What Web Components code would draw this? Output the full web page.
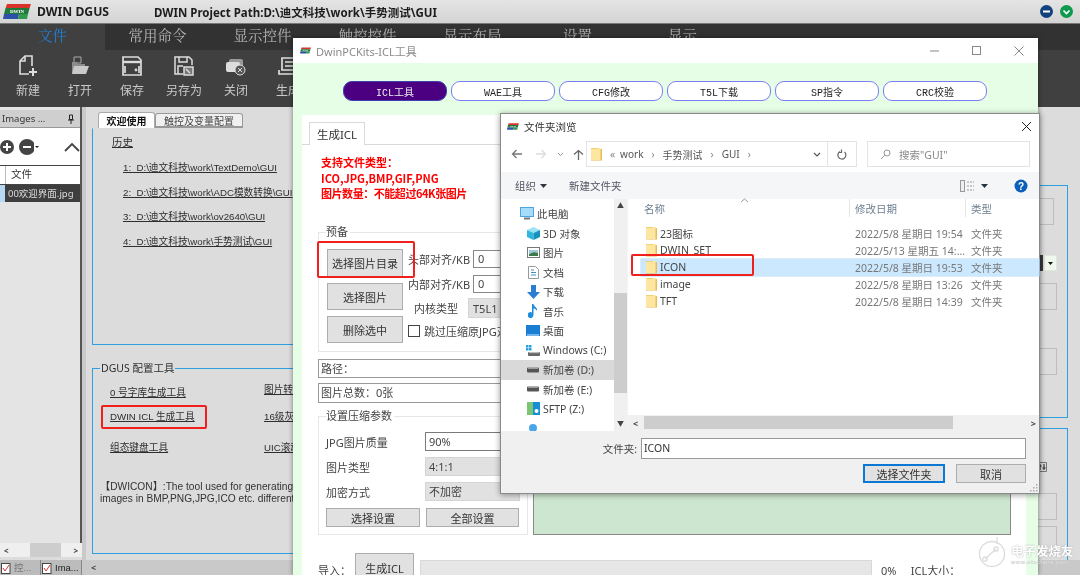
<!DOCTYPE html>
<html lang="zh">
<head>
<meta charset="utf-8">
<title>DWIN DGUS</title>
<style>
  html, body { margin: 0; padding: 0; background: #d9d9d9; }
</style>
</head>
<body>
<dgus-page>
  <app-window></app-window>
  <icl-window></icl-window>
  <folder-dialog></folder-dialog>
  <red-mark x="101" y="405" w="106" h="24"></red-mark>
  <red-mark x="317" y="241" w="98" h="37"></red-mark>
  <red-mark x="631" y="254" w="123" h="22"></red-mark>
  <fans-mark></fans-mark>
</dgus-page>

<script>
const ARIAL = '"Liberation Sans","Noto Sans CJK SC",sans-serif';
const UI = '"Noto Sans","Noto Sans CJK SC",sans-serif';

// simple shadow element: markup only
function def(tag, html) {
  customElements.define(tag, class extends HTMLElement {
    constructor() {
      super();
      this.attachShadow({mode: 'open'}).innerHTML = html;
    }
  });
}

const LOGO = `<svg viewBox="0 0 28 15" width="28" height="15">
  <path d="M4 0H28L26.6 4H2.6Z" fill="#d8342c"/>
  <path d="M2.6 4H26.6L25 10H1Z" fill="#1f7a3c"/>
  <path d="M1 10H16L15 15H0Z" fill="#2c4fa8"/>
  <path d="M16 10H25L24 15H15Z" fill="#2f9a4c"/>
  <text x="14" y="9" font-size="5" font-weight="700" text-anchor="middle" fill="#fff" font-family="Liberation Serif">DWIN</text>
</svg>`;

def('dgus-page', `<style>
  :host { display: block; position: relative; width: 1080px; height: 575px; overflow: hidden; filter: blur(.35px); }
</style><slot></slot>`);

customElements.define('red-mark', class extends HTMLElement {
  constructor() {
    super();
    const a = n => this.getAttribute(n);
    this.attachShadow({mode: 'open'}).innerHTML = `<style>
      :host { position: absolute; left: ${a('x')}px; top: ${a('y')}px; width: ${a('w')}px; height: ${a('h')}px;
        box-sizing: border-box; border: 2px solid #f0201c; border-radius: 2px; }
    </style>`;
  }
});

customElements.define('ribbon-btn', class extends HTMLElement {
  constructor() {
    super();
    this.attachShadow({mode: 'open'}).innerHTML = `<style>
      :host { display: flex; flex-direction: column; align-items: center; width: 52px; }
      .i { height: 22px; margin-top: 5px; }
      .l { margin-top: 6px; font: 12px/16px ${UI}; color: #c9c9c9; white-space: nowrap; }
    </style><div class="i"><slot></slot></div><div class="l">${this.getAttribute('label')}</div>`;
  }
});

customElements.define('pill-btn', class extends HTMLElement {
  constructor() {
    super();
    this.attachShadow({mode: 'open'}).innerHTML = `<style>
      :host { display: flex; align-items: center; justify-content: center; box-sizing: border-box; width: 104px; height: 20px;
        border: 1.5px solid #7c7cf5; border-radius: 9px; background: #fff; color: #222;
        font: 10px "Liberation Mono","Noto Sans CJK SC",monospace; }
      :host([on]) { background: #4b0082; color: #eee; border-color: #3f3fb0; }
    </style><slot></slot>`;
  }
});

customElements.define('win-btn', class extends HTMLElement {
  constructor() {
    super();
    this.attachShadow({mode: 'open'}).innerHTML = `<style>
      :host { display: flex; align-items: center; justify-content: center; box-sizing: border-box;
        background: #e1e1e1; border: 1px solid #adadad; color: #333; font: 11px ${UI}; white-space: nowrap; }
      :host([main]) { border: 2px solid #0c78d4; }
    </style><slot></slot>`;
  }
});

def('folder-ico', `<style>:host { display: inline-flex; }</style>
<svg width="11" height="14" viewBox="0 0 11 14">
  <path d="M0 1H6L7 2H11V13.500H0Z" fill="#e7bd58"/>
  <path d="M0 1H9.500V13H0Z" fill="#fde6a0"/>
  <path d="M0 1H7V2H0Z" fill="#f2cf73"/>
</svg>`);

customElements.define('nav-item', class extends HTMLElement {
  constructor() {
    super();
    this.attachShadow({mode: 'open'}).innerHTML = `<style>
      :host { display: flex; align-items: center; height: 19.5px; box-sizing: border-box; padding-left: 25px; gap: 3px;
        font: 10.5px ${UI}; color: #444; white-space: nowrap; }
      :host([root]) { padding-left: 19px; }
      :host([sel]) { background: #d9d9d9; }
      .i { width: 14px; height: 14px; display: flex; align-items: center; justify-content: center; }
    </style><span class="i"><slot name="i"></slot></span><slot></slot>`;
  }
});

customElements.define('file-row', class extends HTMLElement {
  constructor() {
    super();
    const a = n => this.getAttribute(n);
    this.attachShadow({mode: 'open'}).innerHTML = `<style>
      :host { display: flex; align-items: center; height: 17px; font: 10.5px ${UI}; color: #777; white-space: nowrap; }
      :host([sel]) { background: #cce8ff; box-shadow: 0 0 0 .5px #b5dcfb; }
      .n { width: 214px; box-sizing: border-box; padding-left: 5px; display: flex; align-items: center; gap: 3px; color: #444; }
      .d { width: 116px; }
    </style><div class="n"><folder-ico></folder-ico>${a('name')}</div><div class="d">${a('date')}</div><div>文件夹</div>`;
  }
});

def('tool-link', `<style>
  :host { font: 9.7px ${ARIAL}; color: #2e2e2e; text-decoration: underline; white-space: nowrap; overflow: hidden; }
</style><slot></slot>`);

def('app-titlebar', `<style>
  :host { display: flex; align-items: center; height: 24px; box-sizing: border-box; padding-left: 3px;
    background: linear-gradient(#e4e4e4, #d4d4d4); border-bottom: 1px solid #777; color: #1c1c1c; white-space: nowrap; }
  .t { margin-left: 6px; width: 117px; font: 700 12.2px ${UI}; }
  .p { font: 700 11.5px ${UI}; flex: 1; }
  .c { display: flex; gap: 7px; margin-right: -13px; }
</style>
${LOGO}<span class="t">DWIN DGUS</span><span class="p">DWIN Project Path:D:\\迪文科技\\work\\手势测试\\GUI</span>
<div class="c">
  <svg width="13" height="13"><circle cx="6.5" cy="6.5" r="6.5" fill="#12427e"/><path d="M3 6.5H10" stroke="#fff" stroke-width="2"/></svg>
  <svg width="13" height="13"><circle cx="6.5" cy="6.5" r="6.5" fill="#0d9a4c"/><path d="M3.5 5.5L6.5 8.5L9.5 5.5" stroke="#fff" stroke-width="1.6" fill="none"/></svg>
  <svg width="13" height="13"><circle cx="6.5" cy="6.5" r="6.5" fill="#ee4030"/></svg>
</div>`);

def('app-ribbon', `<style>
  :host { display: block; background: #404040; height: 83px; }
  .tabs { display: flex; height: 26px; background: #323232; }
  .tabs span { width: 105px; text-align: center; font: 14.5px/22px "Noto Serif CJK SC","Noto Sans CJK SC",sans-serif; color: #b4b4b4; }
  .tabs .on { background: #404040; color: #1f7fd8; }
  .tools { display: flex; padding-left: 2px; }
</style>
<div class="tabs"><span class="on">文件</span><span>常用命令</span><span>显示控件</span><span>触控控件</span><span>显示布局</span><span>设置</span><span>显示</span></div>
<div class="tools">
  <ribbon-btn label="新建"><svg width="20" height="22" viewBox="0 0 20 22" fill="none" stroke="#ddd" stroke-width="1.6"><path d="M11 19H2V6L7 1H14V11"/><path d="M7 1V6H2"/><path d="M15 13V21M11 17H19" stroke-width="2"/></svg></ribbon-btn>
  <ribbon-btn label="打开"><svg width="18" height="22" viewBox="0 0 18 22"><path d="M3 2H10V8H3Z" fill="none" stroke="#aaa"/><path d="M1 7H6L7 9H14V18H1Z" fill="#8d8d8d"/><path d="M3 11H18L15 19H1Z" fill="#c9c9c9"/></svg></ribbon-btn>
  <ribbon-btn label="保存"><svg width="20" height="22" viewBox="0 0 20 22" fill="none" stroke="#ddd" stroke-width="1.7"><path d="M1 2H16L19 5V20H1Z"/><path d="M1 7H19" stroke-width="2.4"/><path d="M3 11V18M17 11V18"/><circle cx="14" cy="15" r=".6"/></svg></ribbon-btn>
  <ribbon-btn label="另存为"><svg width="20" height="22" viewBox="0 0 20 22" fill="none" stroke="#ddd" stroke-width="1.5"><path d="M9 19H1V2H15L18 5V10"/><path d="M5 2V7H13V2M4 19V11H9"/><rect x="10" y="12" width="9" height="8" fill="#777"/><path d="M12 14L16 18"/></svg></ribbon-btn>
  <ribbon-btn label="关闭"><svg width="20" height="22" viewBox="0 0 20 22"><rect x="3" y="4" width="14" height="11" rx="2" fill="#999"/><rect x="0" y="7" width="14" height="10" rx="2" fill="#ddd"/><circle cx="14" cy="15" r="5" fill="#555" stroke="#ddd"/><path d="M12 13L16 17M16 13L12 17" stroke="#ddd"/></svg></ribbon-btn>
  <ribbon-btn label="生成"><svg width="20" height="22" viewBox="0 0 20 22" fill="none" stroke="#ddd" stroke-width="1.7"><path d="M4 3H18V15H4Z"/><path d="M7 7H15M7 11H15"/><path d="M1 15V19H17"/></svg></ribbon-btn>
</div>`);

def('images-panel', `<style>
  :host { display: flex; flex-direction: column; height: 453px; box-sizing: border-box; background: #dcdcdc; }
  .in { flex: 1; display: flex; flex-direction: column; background: #e4e4e4; border-right: 2px solid #555; }
  .h { display: flex; justify-content: space-between; align-items: center; height: 17px; margin-top: 3px; padding: 0 5px 0 2px; background: #cfcfcf;
    font: 9.5px ${UI}; color: #333; }
  .b { display: flex; align-items: center; gap: 5px; height: 38px; background: #fff; padding-left: 0; border-top: 1px solid #999; box-sizing: border-box; }
  .th { display: flex; height: 18px; background: #fff; border: 1px solid #444; border-width: 1px 0; font: 10.5px/17px ${UI}; color: #333; }
  .th i { width: 5px; border-right: 1px solid #bbb; }
  .th span { padding-left: 5px; }
  .row { display: flex; height: 17px; font: 9.5px/17px ${UI}; color: #ddd; white-space: nowrap; }
  .row i { width: 5px; background: #b7d7f2; }
  .row span { flex: 1; background: #3e3e3e; padding-left: 3px; overflow: hidden; }
  .sb { display: flex; align-items: center; justify-content: space-between; height: 14px; background: #efefef; position: relative; font: 700 8px ${UI}; color: #444; padding: 0 4px; }
  .sb b { position: absolute; left: 30px; width: 31px; height: 100%; background: #cdcdcd; }
</style>
<div class="in">
  <div class="h"><span>Images ...</span>
    <svg width="8" height="10" viewBox="0 0 8 10" fill="none" stroke="#222"><path d="M2.5 1H5.5V5.500H2.500ZM1 6H7M4 6V10"/></svg></div>
  <div class="b">
    <svg width="14" height="14" style="margin-left:0"><circle cx="7" cy="7" r="7" fill="#444"/><path d="M3 7H11M7 3V11" stroke="#fff" stroke-width="2"/></svg>
    <svg width="16" height="16"><circle cx="8" cy="8" r="8" fill="#444"/><path d="M4 8H12" stroke="#fff" stroke-width="2"/></svg>
    <svg width="4" height="4" style="margin-left:-4px"><path d="M0 1H4L2 3Z" fill="#222"/></svg>
    <svg width="16" height="10" style="margin-left:20px" fill="none" stroke="#444" stroke-width="1.8"><path d="M1 9L8 2L15 9"/></svg>
  </div>
  <div class="th"><i></i><span>文件</span></div>
  <div class="row"><i></i><span>00欢迎界面.jpg</span></div>
</div>
<div class="sb"><span>&lt;</span><b></b><span>&gt;</span></div>
<div style="height:3px"></div>`);

def('bottom-tabs', `<style>
  :host { display: flex; height: 15px; background: #bcbcbc; width: 82px; font: 9.5px/15px ${ARIAL}; }
  div { display: flex; align-items: center; gap: 3px; padding-left: 1px; width: 39px; border-right: 1px solid #888; white-space: nowrap; overflow: hidden; }
  .a { color: #777; } .b { color: #222; }
</style>
<div class="a"><svg width="10" height="12" viewBox="0 0 10 12"><rect x=".5" y="1.500" width="8.500" height="10" fill="#fff" stroke="#444"/><path d="M2 6L4 9L8 3" stroke="#d33" fill="none"/></svg>控...</div>
<div class="b"><svg width="10" height="12" viewBox="0 0 10 12"><rect x=".5" y="1.500" width="8.500" height="10" fill="#fff" stroke="#444"/><path d="M2 6L4 9L8 3" stroke="#d33" fill="none"/></svg>Ima...</div>`);

def('welcome-box', `<style>
  :host { display: block; box-sizing: border-box; height: 217px; border: 1px solid #2ea0e0; border-top-color: transparent; padding: 7px 0 0 19px;
    font: 9.7px ${ARIAL}; color: #2e2e2e; }
  u { display: block; white-space: nowrap; }
  .l { margin-left: 11px; line-height: 24.500px; }
  .t { height: 20px; line-height: 13px; font: 10.5px/13px ${UI}; }
</style>
<u class="t">历史</u>
<u class="l">1:&nbsp; D:\\迪文科技\\work\\TextDemo\\GUI</u>
<u class="l">2:&nbsp; D:\\迪文科技\\work\\ADC模数转换\\GUI</u>
<u class="l">3:&nbsp; D:\\迪文科技\\work\\ov2640\\GUI</u>
<u class="l">4:&nbsp; D:\\迪文科技\\work\\手势测试\\GUI</u>`);

def('tools-box', `<style>
  :host { display: block; margin-top: 16px; }
  fieldset { margin: 0; box-sizing: border-box; height: 193px; border: 1px solid #2ea0e0; padding: 5px 0 0 7px; font: 10.2px ${ARIAL}; color: #2e2e2e; }
  legend { margin-left: 0; padding: 0 1px; font: 10.5px/14px ${UI}; }
  .g { display: grid; grid-template-columns: 154px 1fr; grid-template-rows: 24px 24px 38px; align-items: center; padding-left: 10px; }
  .s { padding-bottom: 6px; }
  .d { margin-top: 15px; line-height: 12px; white-space: nowrap; color: #333; }
</style>
<fieldset><legend>DGUS 配置工具</legend>
  <div class="g">
    <tool-link>0 号字库生成工具</tool-link><tool-link class="s">图片转换工具</tool-link>
    <tool-link>DWIN ICL 生成工具</tool-link><tool-link>16级灰度工具</tool-link>
    <tool-link>组态键盘工具</tool-link><tool-link>UIC滚动工具</tool-link>
  </div>
  <div class="d">【DWICON】:The tool used for generating D<br>images in BMP,PNG,JPG,ICO etc. different s</div>
</fieldset>`);

def('side-boxes', `<style>
  :host { display: flex; flex-direction: column; width: 228px; padding-top: 57px; box-sizing: content-box; }
  .x { box-sizing: border-box; border: 1px solid #2ea0e0; display: flex; flex-direction: column; align-items: flex-end; padding-right: 10px; }
  .a { height: 233px; padding-top: 12px; }
  .b { height: 133px; margin-top: 10px; padding-top: 33px; }
  .k { box-sizing: border-box; width: 60px; height: 27px; border: 1px solid #bdbdbd; }
  .c { display: flex; margin-top: 30px; width: 60px; height: 16px; background: linear-gradient(90deg, #3a3a3a 46px, #dcdcdc 46px); justify-content: flex-end; }
  .c i { display: flex; align-items: center; justify-content: center; box-sizing: border-box; width: 13px; background: #f0f8ee; border: 1px solid #dfe8dc; }
</style>
<div class="x a">
  <div class="k" style="margin-right:3px"></div>
  <div class="c"><i><svg width="5" height="3"><path d="M0 0H5L2.500 3Z" fill="#111"/></svg></i></div>
  <div class="k" style="margin-top:12px"></div>
  <div class="k" style="margin-top:38px"></div>
</div>
<div class="x b">
  <svg width="10" height="10" style="margin-right:10px"><path d="M.5 .5H9.500V9.500H.5Z" fill="none" stroke="#777"/><path d="M3 2V8M7 2V8M1.500 4H4.500M5.500 6H8.500" stroke="#222"/></svg>
  <div class="k" style="margin-top:21px"></div>
  <div class="k" style="margin-top:6px"></div>
</div>`);

def('app-window', `<style>
  :host { display: block; height: 575px; background: #dcdcdc; overflow: hidden; }
  .body { display: flex; height: 468px; }
  .gut { width: 4px; background: #c9c9c9; }
  .main { flex: 1; position: relative; }
  .tabs { display: flex; align-items: flex-end; height: 21px; padding-left: 12px; font: 700 10px ${UI}; }
  .tabs span { display: flex; align-items: center; justify-content: center; height: 15px; white-space: nowrap; }
  .tabs .on { width: 57px; background: #fff; color: #111; border: 1px solid #aaa; border-bottom: 0; border-radius: 3px 3px 0 0; height: 16px; box-sizing: border-box; }
  .tabs .off { width: 88px; background: #f0f0f0; color: #444; font-weight: 400; border: 1px solid #999; border-width: 1px 1px 2px 1px; border-radius: 3px 3px 0 0; box-sizing: border-box; }
  .cols { display: flex; gap: 8px; margin-left: 6px; }
  .left { width: 740px; }
  .bar { position: absolute; left: 0; right: 0; top: 453px; height: 15px; background: #c9c9c9; font: 700 9px/15px ${UI}; color: #444; padding-left: 5px; }
</style>
<app-titlebar></app-titlebar>
<app-ribbon></app-ribbon>
<div class="body">
  <div style="width:82px"><images-panel></images-panel><bottom-tabs></bottom-tabs></div>
  <div class="gut"></div>
  <div class="main">
    <div class="tabs"><span class="on">欢迎使用</span><span class="off">触控及变量配置</span></div>
    <div class="cols">
      <div class="left"><welcome-box></welcome-box><tools-box></tools-box></div>
      <side-boxes></side-boxes>
    </div>
    <div class="bar">&lt;</div>
  </div>
</div>`);

def('icl-prep', `<style>
  :host { display: block; margin-top: 23.5px; font: 11px ${UI}; color: #444; }
  fieldset { margin: 0; border: 1px solid #e6e6e6; padding: 10px 0 8px 8px; display: flex; gap: 5px; height: 127px; box-sizing: border-box; }
  legend { margin-left: -1px; padding: 0 2px 0 0; font: 11px/14px ${UI}; }
  .bs { display: flex; flex-direction: column; gap: 6px; }
  win-btn { width: 76px; height: 27px; }
  .r { display: flex; flex-direction: column; gap: 7px; padding-top: 1px; width: 119px; overflow: hidden; white-space: nowrap; }
  .f { display: flex; align-items: center; height: 18px; gap: 5px; }
  .f span { width: 60px; }
  .v { box-sizing: border-box; flex: 1; height: 18px; border: 1px solid #888; background: #fff; padding-left: 4px; line-height: 16px; }
  .k { display: flex; align-items: center; margin: -2px 0 0 6px; height: 20px; gap: 10px; }
  .k b { font-weight: 400; box-sizing: border-box; width: 60px; height: 20px; line-height: 20px; background: #e1e1e1; padding-left: 4px; border: 1px solid #d5d5d5; }
  .ck { display: flex; align-items: center; gap: 4px; margin-top: -2px; }
  .ck i { width: 10px; height: 10px; border: 1px solid #444; }
</style>
<fieldset><legend>预备</legend>
  <div class="bs"><win-btn style="height:28px">选择图片目录</win-btn><win-btn>选择图片</win-btn><win-btn>删除选中</win-btn></div>
  <div class="r">
    <div class="f"><span>头部对齐/KB</span><div class="v">0</div></div>
    <div class="f"><span>内部对齐/KB</span><div class="v">0</div></div>
    <div class="k"><span>内核类型</span><b>T5L1</b></div>
    <div class="ck"><i></i>跳过压缩原JPG对</div>
  </div>
</fieldset>`);

def('icl-compress', `<style>
  :host { display: block; margin-top: 6px; font: 11px ${UI}; color: #444; }
  fieldset { margin: 0; border: 1px solid #e6e6e6; padding: 9px 7px 8px 7px; box-sizing: border-box; height: 126px; }
  legend { margin-left: 0; padding: 0 2px 0 0; font: 11px/14px ${UI}; }
  .f { display: flex; align-items: center; height: 19px; margin-bottom: 6px; }
  .f span { width: 99px; }
  .f div { box-sizing: border-box; width: 95px; height: 19px; line-height: 17px; padding-left: 3px; background: #e1e1e1; border: 1px solid #d5d5d5; }
  .f .w { background: #fff; border-color: #7a7a7a; }
  .b { display: flex; gap: 6px; margin-top: 7px; }
  win-btn { width: 94px; height: 19px; }
</style>
<fieldset><legend>设置压缩参数</legend>
  <div class="f"><span>JPG图片质量</span><div class="w">90%</div></div>
  <div class="f"><span>图片类型</span><div>4:1:1</div></div>
  <div class="f"><span>加密方式</span><div>不加密</div></div>
  <div class="b"><win-btn>选择设置</win-btn><win-btn style="width:93px">全部设置</win-btn></div>
</fieldset>`);

def('icl-window', `<style>
  :host { position: absolute; left: 293px; top: 38px; width: 745px; height: 537px; display: flex; flex-direction: column;
    background: #e6fde6; box-shadow: 0 0 5px rgba(0,0,0,.45); overflow: hidden; }
  .tb { display: flex; align-items: center; height: 25px; background: #fff; padding-left: 7px; gap: 5px; font: 11px ${UI}; color: #8b8b8b; flex: none; }
  .tb .sp { flex: 1; }
  .pills { display: flex; gap: 4px; padding: 18px 0 0 50px; flex: none; }
  .panel { margin: 14px 0 0 9px; width: 724px; flex: 1; background: #fff; }
  .strip { padding: 7px 0 0 7px; border-bottom: 1px solid #d9d9d9; height: 30px; box-sizing: border-box; }
  .tab { display: flex; align-items: center; justify-content: center; box-sizing: border-box; width: 56px; height: 23px; background: #fff; border: 1px solid #d9d9d9; border-bottom: 0;
    font: 11.5px ${UI}; color: #333; }
  .c { padding-left: 16px; }
  .red { margin: 10px 0 0 3px; font: 700 11px/15.500px "Noto Sans CJK SC",sans-serif; color: #f00; height: 46.5px; white-space: nowrap; }
  .red span { letter-spacing: -.45px; }
  .main { display: flex; gap: 5px; }
  .l { width: 210px; flex: none; }
  .in { box-sizing: border-box; height: 20px; border: 1px solid #999; font: 11px/18px ${UI}; color: #444; padding-left: 2px; background: #fff; }
  .list { margin-top: 20px; width: 478px; box-sizing: border-box; background: #cde6cf; border: 1px solid #8a8a8a; }
  .imp { display: flex; margin-top: 18px; font: 11px ${UI}; color: #444; }
  .imp span { width: 37px; line-height: 36px; }
  .imp win-btn { width: 59px; height: 30px; }
  .imp .pr { width: 452px; height: 20px; margin: 7px 9px 0 6px; background: #e6e6e6; border: 1px solid #d8d8d8; box-sizing: border-box; }
  .imp .o { line-height: 36px; white-space: nowrap; }
</style>
<div class="tb">
  ${LOGO.replace('width="28" height="15"', 'width="11" height="7"')}
  <span>DwinPCKits-ICL工具</span><span class="sp"></span>
  <svg width="10" height="10" style="margin-right:27px"><path d="M0 5H9" stroke="#888"/></svg>
  <svg width="9" height="9" style="margin-right:28px"><rect x=".5" y=".5" width="8" height="8" fill="none" stroke="#888"/></svg>
  <svg width="10" height="10" style="margin-right:14px"><path d="M.5 .5L9.500 9.500M9.500 .5L.5 9.500" stroke="#888"/></svg>
</div>
<div class="pills">
  <pill-btn on>ICL工具</pill-btn><pill-btn>WAE工具</pill-btn><pill-btn>CFG修改</pill-btn>
  <pill-btn>T5L下载</pill-btn><pill-btn>SP指令</pill-btn><pill-btn>CRC校验</pill-btn>
</div>
<div class="panel">
  <div class="strip"><div class="tab">生成ICL</div></div>
  <div class="c">
    <div class="main">
      <div class="l">
        <div class="red">支持文件类型\uFF1A<br>ICO,JPG,BMP,GIF,PNG<br><span>图片数量\uFF1A不能超过64K张图片</span></div>
        <icl-prep></icl-prep>
        <div class="in" style="margin-top:7px;height:19px">路径\uFF1A</div>
        <div class="in" style="margin-top:5px">图片总数\uFF1A0张</div>
        <icl-compress></icl-compress>
      </div>
      <div class="list"></div>
    </div>
    <div class="imp"><span>导入\uFF1A</span><win-btn>生成ICL</win-btn><div class="pr"></div><div class="o">0%&nbsp;&nbsp;&nbsp;&nbsp;&nbsp;ICL大小\uFF1A</div></div>
  </div>
</div>`);

def('dlg-nav', `<style>
  :host { display: flex; width: 126px; flex: none; overflow: hidden; }
  .l { flex: 1; padding-top: 5px; min-width: 0; }
  .s { width: 13px; background: #f0f0f0; display: flex; flex-direction: column; align-items: center; font: 700 7px ${UI}; color: #444; }
  .s b { display: block; width: 100%; height: 100px; background: #cdcdcd; margin-top: 80px; }
  .s span { height: 14px; line-height: 14px; }
  .s .e { margin-top: auto; }
</style>
<div class="l">
  <nav-item root><svg slot="i" width="14" height="13" viewBox="0 0 14 13"><rect width="14" height="10" fill="#4aa6e6"/><rect x="1" y="1" width="12" height="8" fill="#a6dcf8"/><rect x="4" y="10.500" width="6" height="2" fill="#777"/></svg>此电脑</nav-item>
  <nav-item><svg slot="i" width="13" height="13" viewBox="0 0 13 13"><path d="M6.500 0L13 3L6.500 6L0 3Z" fill="#9be4f4"/><path d="M0 3L6.500 6V13L0 10Z" fill="#2eb6dc"/><path d="M13 3L6.500 6V13L13 10Z" fill="#1791c0"/></svg>3D 对象</nav-item>
  <nav-item><svg slot="i" width="13" height="11" viewBox="0 0 13 11"><rect x=".5" y=".5" width="12" height="10" fill="#fff" stroke="#777"/><path d="M2 3H11V6L7 5L2 7Z" fill="#9ec6df"/><path d="M2 7L7 5L11 6V9H2Z" fill="#3d7a4a"/></svg>图片</nav-item>
  <nav-item><svg slot="i" width="11" height="13" viewBox="0 0 11 13"><path d="M.5 .5H7.500L10.500 3.500V12.500H.5Z" fill="#fff" stroke="#999"/><path d="M3 4H6M3 6.500H8M3 9H8" stroke="#3d8fd0"/></svg>文档</nav-item>
  <nav-item><svg slot="i" width="13" height="14" viewBox="0 0 13 14"><path d="M4 0H9V7H13L6.500 14L0 7H4Z" fill="#2b7cd3"/></svg>下载</nav-item>
  <nav-item><svg slot="i" width="10" height="14" viewBox="0 0 10 14"><path d="M4 0H5.500C6 3 10 3.500 9 7C8 5 6.500 4.500 5.500 4.500V11A3 3 0 1 1 4 8.500Z" fill="#1f8ce0"/></svg>音乐</nav-item>
  <nav-item><svg slot="i" width="14" height="11" viewBox="0 0 14 11"><rect width="14" height="11" fill="#1a7fd4"/><rect x="1" y="9.500" width="12" height="1" fill="#d5ecff"/></svg>桌面</nav-item>
  <nav-item><svg slot="i" width="14" height="13" viewBox="0 0 14 13"><path d="M0 1H2.500V3.500H0ZM3 1H5.500V3.500H3ZM0 4H2.500V6.500H0ZM3 4H5.500V6.500H3Z" fill="#2aa0e6"/><rect x="2" y="8" width="12" height="4" rx="1" fill="#666"/><rect x="3" y="8" width="10" height="1.200" fill="#bbb"/></svg>Windows (C:)</nav-item>
  <nav-item sel><svg slot="i" width="13" height="6" viewBox="0 0 13 6"><rect width="12" height="5" y=".5" rx="1" fill="#555"/><rect x="1" y=".5" width="10" height="1.200" fill="#bbb"/></svg>新加卷 (D:)</nav-item>
  <nav-item><svg slot="i" width="13" height="6" viewBox="0 0 13 6"><rect width="12" height="5" y=".5" rx="1" fill="#555"/><rect x="1" y=".5" width="10" height="1.200" fill="#bbb"/></svg>新加卷 (E:)</nav-item>
  <nav-item><svg slot="i" width="13" height="13" viewBox="0 0 13 13"><rect width="6" height="13" fill="#7cc576"/><rect x="6" width="7" height="13" fill="#1590d8"/><circle cx="9.500" cy="9" r="2" fill="#fff"/></svg>SFTP (Z:)</nav-item>
  <nav-item><svg slot="i" width="12" height="12" viewBox="0 0 12 12"><circle cx="6" cy="6" r="4" fill="#4aa6e6"/></svg></nav-item>
</div>
<div class="s"><span>▲</span><b></b><span class="e">▼</span></div>`);

def('dlg-files', `<style>
  :host { flex: 1; display: flex; flex-direction: column; min-width: 0; position: relative; border-left: 1px solid #f4f4f4; }
  .h { display: flex; height: 21px; flex: none; font: 10.5px/20px ${UI}; color: #6d7f91; padding-left: 16px; }
  .h div { box-sizing: border-box; height: 18px; }
  .h .a { width: 205px; } .h .b { width: 116px; border-left: 1px solid #e5e5e5; padding-left: 5px; } .h .c { border-left: 1px solid #e5e5e5; padding-left: 5px; }
  .car { position: absolute; left: 112px; top: -1px; }
  .rows { padding: 4.500px 0 0 13px; }
  .bar { margin-top: auto; display: flex; align-items: center; height: 16px; background: #f0f0f0; font: 700 9px ${UI}; color: #444; padding: 0 3px 0 5px; justify-content: space-between; position: relative; }
  .bar b { position: absolute; left: 16px; width: 309px; top: 1px; bottom: 2px; background: #cdcdcd; }
</style>
<svg class="car" width="9" height="5" fill="none" stroke="#999"><path d="M1 4L4.500 1L8 4"/></svg>
<div class="h"><div class="a">名称</div><div class="b">修改日期</div><div class="c">类型</div></div>
<div class="rows">
  <file-row name="23图标" date="2022/5/8 星期日 19:54"></file-row>
  <file-row name="DWIN_SET" date="2022/5/13 星期五 14:..."></file-row>
  <file-row sel name="ICON" date="2022/5/8 星期日 19:53"></file-row>
  <file-row name="image" date="2022/5/8 星期日 13:26"></file-row>
  <file-row name="TFT" date="2022/5/8 星期日 14:39"></file-row>
</div>
<div class="bar"><span>&lt;</span><b></b><span>&gt;</span></div>`);

def('folder-dialog', `<style>
  :host { position: absolute; left: 500px; top: 113px; width: 540px; height: 381px; box-sizing: border-box; display: flex; flex-direction: column;
    background: #fff; border: 1px solid #8a8a8a; box-shadow: 0 1px 6px rgba(0,0,0,.4); font: 10.5px ${UI}; color: #444; }
  .tb { display: flex; align-items: center; height: 24px; padding: 0 7px 0 6px; gap: 5px; font-size: 10.5px; color: #333; flex: none; }
  .tb span { flex: 1; }
  .ad { display: flex; align-items: center; height: 26px; margin-top: 3px; flex: none; }
  .nv { display: flex; align-items: center; width: 85px; padding-left: 10px; box-sizing: border-box; }
  .crumb { display: flex; align-items: center; width: 271px; height: 26px; box-sizing: border-box; border: 1px solid #e3e3e3; padding-left: 4px; gap: 8px; font-size: 10px; color: #555; white-space: nowrap; }
  .crumb .g { color: #888; font-size: 10px; }
  .crumb .sp { flex: 1; }
  .crumb .re { display: flex; align-items: center; justify-content: center; width: 28px; height: 100%; border-left: 1px solid #e3e3e3; }
  .se { display: flex; align-items: center; width: 163px; height: 26px; box-sizing: border-box; margin-left: 10px; border: 1px solid #e3e3e3; padding-left: 12px; gap: 8px; color: #888; }
  .tl { display: flex; align-items: center; height: 27px; margin-top: 5px; background: #f5f6f7; padding-left: 14px; color: #556; flex: none; white-space: nowrap; }
  .tl .v { margin-left: auto; display: flex; align-items: center; }
  .mid { display: flex; height: 232px; flex: none; }
  .bt { flex: 1; background: #f0f0f0; padding-top: 7px; position: relative; }
  .r1 { display: flex; align-items: center; height: 21px; }
  .r1 span { width: 136px; text-align: right; margin-right: 4px; color: #444; }
  .r1 div { box-sizing: border-box; width: 385px; height: 21px; background: #fff; border: 1px solid #999; line-height: 19px; padding-left: 2px; color: #333; }
  .r2 { display: flex; justify-content: flex-end; gap: 11px; margin-top: 5px; padding-right: 13px; }
  .r2 win-btn { height: 19px; width: 70px; }
  .grip { position: absolute; right: 1px; bottom: 1px; }
</style>
<div class="tb">
  ${LOGO.replace('width="28" height="15"', 'width="12" height="7"')}
  <span>文件夹浏览</span>
  <svg width="11" height="11" fill="none" stroke="#222"><path d="M1 1L10 10M10 1L1 10"/></svg>
</div>
<div class="ad">
  <div class="nv">
    <svg width="12" height="10" fill="none" stroke="#777" stroke-width="1.300"><path d="M11 5H1.500M5.500 1L1.500 5L5.500 9"/></svg>
    <svg width="12" height="10" fill="none" stroke="#ddd" stroke-width="1.300" style="margin-left:12px"><path d="M1 5H10.500M6.500 1L10.500 5L6.500 9"/></svg>
    <svg width="7" height="5" fill="none" stroke="#999" style="margin-left:10px"><path d="M1 1L3.500 3.500L6 1"/></svg>
    <svg width="11" height="11" fill="none" stroke="#666" stroke-width="1.300" style="margin-left:9px"><path d="M5.500 11V1.500M1 5.500L5.500 1.500L10 5.500"/></svg>
  </div>
  <div class="crumb">
    <folder-ico></folder-ico><span class="g">«</span><span style="margin-left:-3px">work</span><span class="g">›</span><span>手势测试</span><span class="g">›</span><span>GUI</span><span class="g">›</span><span class="sp"></span>
    <svg width="8" height="5" fill="none" stroke="#555" stroke-width="1.200" style="margin-right:1px"><path d="M1 1L4 4L7 1"/></svg>
    <div class="re" style="margin-left:-3px"><svg width="10" height="11" viewBox="0 0 10 11" fill="none" stroke="#666" stroke-width="1.200"><path d="M3 2.500A4 4 0 1 0 7.500 3M4.500 .5V3.500H1.500"/></svg></div>
  </div>
  <div class="se">
    <svg width="11" height="11" fill="none" stroke="#999"><circle cx="7" cy="4" r="3"/><path d="M5 6L1 10"/></svg>
    <span>搜索"GUI"</span>
  </div>
</div>
<div class="tl">
  <span>组织</span><svg width="7" height="4" style="margin-left:4px"><path d="M0 0H7L3.500 4Z" fill="#334"/></svg>
  <span style="margin-left:22px">新建文件夹</span>
  <div class="v">
    <svg width="14" height="12" fill="none" stroke="#999"><rect x=".5" y=".5" width="4" height="11" fill="#eee"/><path d="M7 2H14M7 6H14M7 10H14" stroke-dasharray="2 1"/></svg>
    <svg width="7" height="4" style="margin-left:7px"><path d="M0 0H7L3.500 4Z" fill="#234"/></svg>
    <svg width="14" height="14" style="margin:0 11px 0 26px"><circle cx="7" cy="7" r="6.500" fill="#0b5fb8"/><text x="7" y="10.500" text-anchor="middle" font-family="Liberation Sans" font-size="10" font-weight="700" fill="#fff">?</text></svg>
  </div>
</div>
<div class="mid"><dlg-nav></dlg-nav><dlg-files></dlg-files></div>
<div class="bt">
  <div class="r1"><span>文件夹:</span><div>ICON</div></div>
  <div class="r2"><win-btn main style="width:82px">选择文件夹</win-btn><win-btn>取消</win-btn></div>
  <svg class="grip" width="8" height="8" fill="#aaa"><rect x="6" y="0" width="1.500" height="1.500"/><rect x="3" y="3" width="1.500" height="1.500"/><rect x="6" y="3" width="1.500" height="1.500"/><rect x="0" y="6" width="1.500" height="1.500"/><rect x="3" y="6" width="1.500" height="1.500"/><rect x="6" y="6" width="1.500" height="1.500"/></svg>
</div>`);

def('fans-mark', `<style>
  :host { position: absolute; left: 978px; top: 537px; display: flex; align-items: center; gap: 5px; color: #fff; pointer-events: none; }
  .t { font: 700 12.5px/16px "Noto Sans CJK SC",sans-serif; white-space: nowrap; text-shadow: 0 0 1.5px #999; margin-top: 2px; }
  .u { font: 6px/7px ${ARIAL}; letter-spacing: .5px; white-space: nowrap; color: #e8e8e8; text-shadow: 0 0 1px #aaa; }
</style>
<svg width="28" height="32" viewBox="0 0 28 32" fill="none" stroke="#dcdcdc" stroke-width="1.300"><circle cx="14" cy="17" r="12.500"/><path d="M7 22L18 12"/><circle cx="7" cy="22" r="2.200"/><circle cx="18" cy="12" r="2.200"/><path d="M19 0V7"/></svg>
<div><div class="t">电子发烧友</div><div class="u">www.elecfans.com</div></div>`);
</script>
</body>
</html>
